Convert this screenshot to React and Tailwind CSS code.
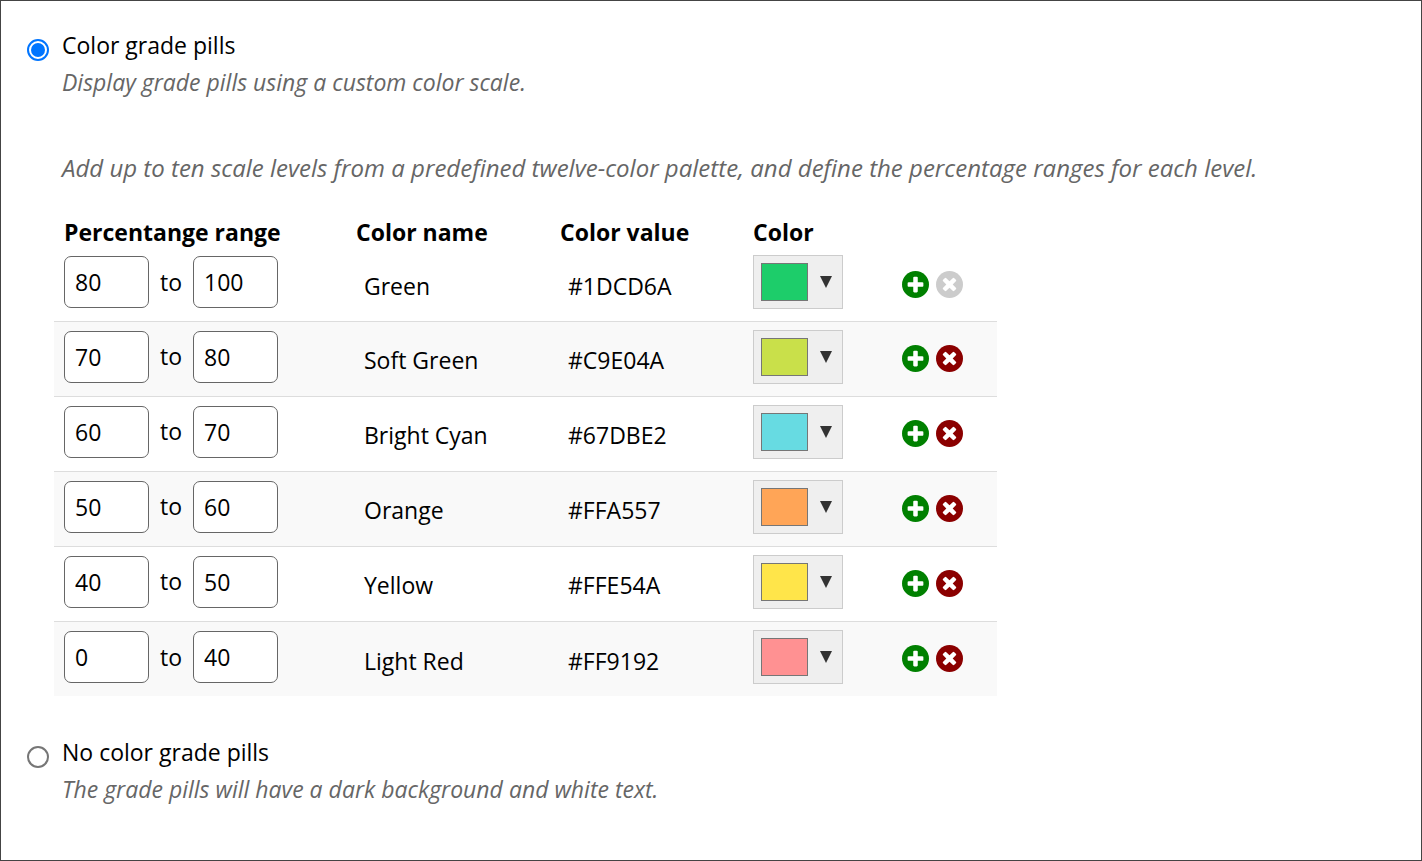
import { useState } from "react";
import clsx from "clsx";

const initialLevels = [
    { from: "80", to: "100", name: "Green", value: "#1DCD6A" },
    { from: "70", to: "80", name: "Soft Green", value: "#C9E04A" },
    { from: "60", to: "70", name: "Bright Cyan", value: "#67DBE2" },
    { from: "50", to: "60", name: "Orange", value: "#FFA557" },
    { from: "40", to: "50", name: "Yellow", value: "#FFE54A" },
    { from: "0", to: "40", name: "Light Red", value: "#FF9192" },
];

function PlusIcon() {
    return (
        <svg className="size-[27px]" viewBox="0 0 1536 1536" aria-hidden="true">
            <circle cx="768" cy="768" r="768" fill="currentColor" />
            <path
                fill="#fff"
                d="M1216 832v-128q0-26-19-45t-45-19h-256v-256q0-26-19-45t-45-19h-128q-26 0-45 19t-19 45v256h-256q-26 0-45 19t-19 45v128q0 26 19 45t45 19h256v256q0 26 19 45t45 19h128q26 0 45-19t19-45v-256h256q26 0 45-19t19-45z"
            />
        </svg>
    );
}

function TimesIcon() {
    return (
        <svg className="size-[27px]" viewBox="0 0 1536 1536" aria-hidden="true">
            <circle cx="768" cy="768" r="768" fill="currentColor" />
            <path
                fill="#fff"
                d="M1149 994q0-26-19-45l-181-181 181-181q19-19 19-45 0-27-19-46l-90-90q-19-19-46-19-26 0-45 19l-181 181-181-181q-19-19-45-19-27 0-46 19l-90 90q-19 19-19 46 0 26 19 45l181 181-181 181q-19 19-19 45 0 27 19 46l90 90q19 19 46 19 26 0 45-19l181-181 181 181q19 19 45 19 27 0 46-19l90-90q19-19 19-46z"
            />
        </svg>
    );
}

function ModeOption({ id, label, description, checked, onSelect }) {
    return (
        <div className="flex items-start gap-[13px]">
            <input
                id={id}
                type="radio"
                name="pill-mode"
                checked={checked}
                onChange={onSelect}
                aria-describedby={`${id}-hint`}
                className="mt-3 grid size-[22px] shrink-0 appearance-none place-items-center rounded-full border-2 border-[#767676] bg-white before:size-[14px] before:rounded-full checked:border-[#0075ff] checked:before:bg-[#0075ff]"
            />
            <div>
                <label htmlFor={id} className="block leading-[37px]">{label}</label>
                <p id={`${id}-hint`} className="italic leading-[37px] text-[#666]">{description}</p>
            </div>
        </div>
    );
}

function RangeInput({ label, value, onChange }) {
    return (
        <input
            type="text"
            aria-label={label}
            value={value}
            onChange={(e) => onChange(e.target.value)}
            className="h-[52px] w-[85px] rounded-[7px] border border-[#666] bg-white px-[10px]"
        />
    );
}

function LevelRow({ level, first, onChange, onAdd, onRemove }) {
    return (
        <tr className={clsx("even:bg-[#f9f9f9]", first ? "h-[73px]" : "h-[75px] border-t border-[#ddd]")}>
            <td className="pb-1 pl-[10px]">
                <div className="flex items-center">
                    <RangeInput label={`${level.name} from`} value={level.from} onChange={(from) => onChange({ from })} />
                    <span className="w-11 text-center">to</span>
                    <RangeInput label={`${level.name} to`} value={level.to} onChange={(to) => onChange({ to })} />
                </div>
            </td>
            <td className="pt-1 pl-2">{level.name}</td>
            <td className="pt-1 pl-2">{level.value}</td>
            <td className="pb-1">
                <button
                    type="button"
                    aria-haspopup="listbox"
                    aria-label={`Pick color, ${level.name}`}
                    className="flex h-[54px] w-[90px] items-center gap-3 border border-[#ccc] bg-[#efefef] pl-[7px]"
                >
                    <span className="h-[38px] w-[47px] border border-[#767676]" style={{ backgroundColor: level.value }} />
                    <svg className="h-3 w-[12px]" viewBox="0 0 12 12" aria-hidden="true">
                        <path d="M0 0h12L6 12z" fill="#333" />
                    </svg>
                </button>
            </td>
            <td className="pl-[18px]">
                <div className="flex gap-[7px]">
                    <button type="button" aria-label="Add level" onClick={onAdd} className="text-[#008000]">
                        <PlusIcon />
                    </button>
                    <button
                        type="button"
                        aria-label="Remove level"
                        disabled={first}
                        onClick={onRemove}
                        className="text-[#8b0000] disabled:text-[#ccc]"
                    >
                        <TimesIcon />
                    </button>
                </div>
            </td>
        </tr>
    );
}

export default function App() {
    const [mode, setMode] = useState("color");
    const [levels, setLevels] = useState(initialLevels);

    const updateLevel = (index, changes) => {
        setLevels(levels.map((level, i) => (i === index ? { ...level, ...changes } : level)));
    };

    const addLevel = (index) => {
        if (levels.length >= 10) return;
        setLevels([...levels.slice(0, index + 1), { ...levels[index] }, ...levels.slice(index + 1)]);
    };

    const removeLevel = (index) => {
        setLevels(levels.filter((_, i) => i !== index));
    };

    return (
        <main className="min-h-screen border border-[#444] bg-white px-[26px] pt-[26px] font-['Open_Sans',sans-serif] text-[23px] text-black">
            <ModeOption
                id="color-pills"
                label="Color grade pills"
                description="Display grade pills using a custom color scale."
                checked={mode === "color"}
                onSelect={() => setMode("color")}
            />

            {/* Scale levels */}
            <section className="pt-12 pb-[38px] pl-[27px]">
                <p className="pl-2 text-2xl leading-[37px] text-[#666] italic">
                    Add up to ten scale levels from a predefined twelve-color palette, and define the percentage ranges for each level.
                </p>
                <table className="mt-[30px] w-[943px] table-fixed border-collapse text-left">
                    <colgroup>
                        <col className="w-[302px]" />
                        <col className="w-[204px]" />
                        <col className="w-[193px]" />
                        <col className="w-[131px]" />
                        <col />
                    </colgroup>
                    <thead>
                        <tr className="h-8">
                            <th className="pl-[10px] leading-8">Percentange range</th>
                            <th className="leading-8">Color name</th>
                            <th className="leading-8">Color value</th>
                            <th className="leading-8">Color</th>
                            <td />
                        </tr>
                    </thead>
                    <tbody>
                        {levels.map((level, i) => (
                            <LevelRow
                                key={i}
                                level={level}
                                first={i === 0}
                                onChange={(changes) => updateLevel(i, changes)}
                                onAdd={() => addLevel(i)}
                                onRemove={() => removeLevel(i)}
                            />
                        ))}
                    </tbody>
                </table>
            </section>

            <ModeOption
                id="plain-pills"
                label="No color grade pills"
                description="The grade pills will have a dark background and white text."
                checked={mode === "plain"}
                onSelect={() => setMode("plain")}
            />
        </main>
    );
}
